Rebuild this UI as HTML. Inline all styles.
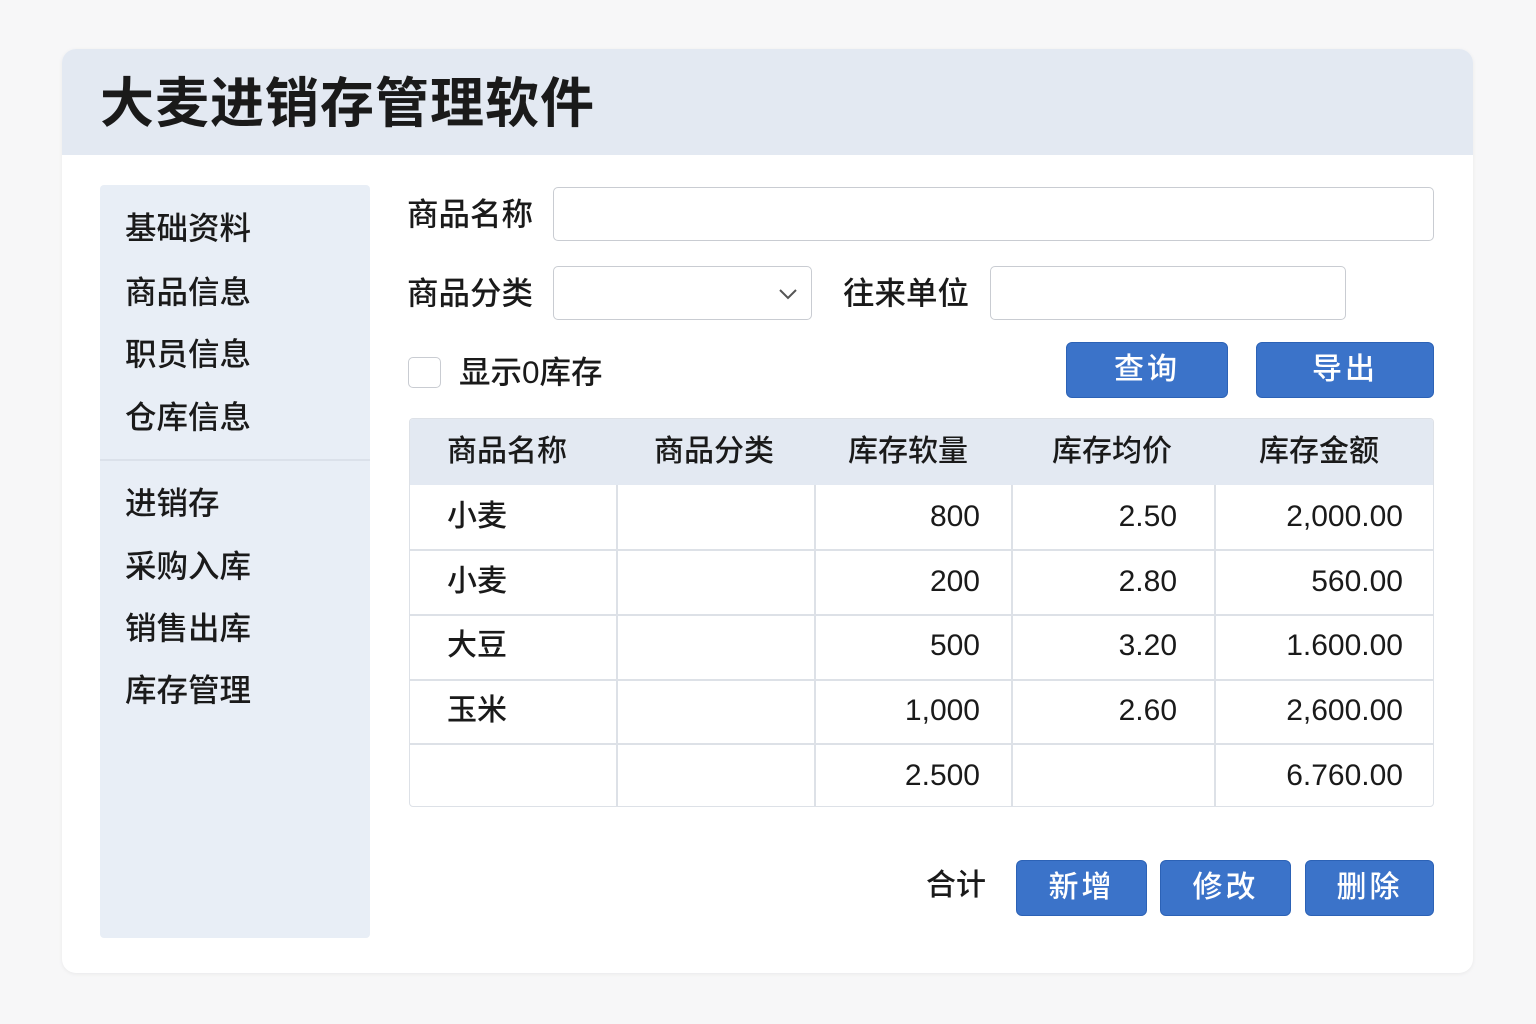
<!DOCTYPE html><html><head><meta charset="utf-8"><style>
*{margin:0;padding:0;box-sizing:border-box}
body{width:1536px;height:1024px;background:#f7f7f8;font-family:"Liberation Sans","Noto Sans CJK SC",sans-serif;color:#1a1a1a;position:relative;overflow:hidden}
.a{position:absolute}
.card{left:62px;top:49px;width:1411px;height:924px;background:#fff;border-radius:14px;box-shadow:0 1px 4px rgba(0,0,0,.06);overflow:hidden}
.hd{left:0;top:0;width:1411px;height:106px;background:#e3e9f2}
.t{font-size:30px;line-height:40px;white-space:nowrap;font-weight:500}
.s{font-size:31.5px}
.inp{border:1.5px solid #c9ccd2;border-radius:5px;background:#fff}
.btn{background:#3b73c9;border:1px solid #2c62b6;border-radius:6px;color:#fff;font-size:30px;text-align:center;letter-spacing:3px;font-weight:500}
.cell{position:absolute;font-size:30px;line-height:40px;font-weight:500;white-space:nowrap}
</style></head><body>
<div class="a card"><div class="a hd"></div>
<div class="a" style="left:38px;top:22px;font-size:54px;font-weight:bold;line-height:66px;letter-spacing:1px">大麦进销存管理软件</div></div>
<div class="a" style="left:100px;top:185px;width:270px;height:753px;background:#e8eef6;border-radius:4px"></div>
<div class="a" style="left:100px;top:459px;width:270px;height:2px;background:#dbe1ea"></div>
<div class="a t s" style="left:125px;top:208px">基础资料</div>
<div class="a t s" style="left:125px;top:272px">商品信息</div>
<div class="a t s" style="left:125px;top:334px">职员信息</div>
<div class="a t s" style="left:125px;top:397px">仓库信息</div>
<div class="a t s" style="left:125px;top:483px">进销存</div>
<div class="a t s" style="left:125px;top:546px">采购入库</div>
<div class="a t s" style="left:125px;top:608px">销售出库</div>
<div class="a t s" style="left:125px;top:670px">库存管理</div>

<div class="a t s" style="left:407px;top:194px">商品名称</div>
<div class="a inp" style="left:553px;top:187px;width:881px;height:54px"></div>
<div class="a t s" style="left:407px;top:273px">商品分类</div>
<div class="a inp" style="left:553px;top:266px;width:259px;height:54px"></div>
<svg class="a" style="left:778px;top:287px" width="20" height="14"><path d="M2 3l8 8 8-8" fill="none" stroke="#555" stroke-width="2"/></svg>
<div class="a t s" style="left:843px;top:273px">往来单位</div>
<div class="a inp" style="left:990px;top:266px;width:356px;height:54px"></div>
<div class="a inp" style="left:408px;top:357px;width:33px;height:31px;border-radius:5px"></div>
<div class="a t s" style="left:459px;top:352px">显示0库存</div>
<div class="a btn" style="left:1066px;top:342px;width:162px;height:56px;line-height:54px">查询</div>
<div class="a btn" style="left:1256px;top:342px;width:178px;height:56px;line-height:54px">导出</div>

<div class="a" style="left:409px;top:418px;width:1025px;height:389px;border:1.5px solid #dde1e7;border-radius:4px;overflow:hidden">
<div class="a" style="left:0;top:0;width:1025px;height:66px;background:#e3e9f2"></div>
<div class="a" style="left:0;top:130px;width:1025px;height:1.5px;background:#dde1e7"></div>
<div class="a" style="left:0;top:195px;width:1025px;height:1.5px;background:#dde1e7"></div>
<div class="a" style="left:0;top:260px;width:1025px;height:1.5px;background:#dde1e7"></div>
<div class="a" style="left:0;top:324px;width:1025px;height:1.5px;background:#dde1e7"></div>
<div class="a" style="left:206px;top:66px;width:1.5px;height:330px;background:#dde1e7"></div>
<div class="a" style="left:404px;top:66px;width:1.5px;height:330px;background:#dde1e7"></div>
<div class="a" style="left:601px;top:66px;width:1.5px;height:330px;background:#dde1e7"></div>
<div class="a" style="left:804px;top:66px;width:1.5px;height:330px;background:#dde1e7"></div>
</div>
<div class="cell" style="left:447px;top:432px">商品名称</div>
<div class="cell" style="left:654px;top:432px">商品分类</div>
<div class="cell" style="left:848px;top:432px">库存软量</div>
<div class="cell" style="left:1052px;top:432px">库存均价</div>
<div class="cell" style="left:1259px;top:432px">库存金额</div>

<div class="cell" style="left:447px;top:497px">小麦</div>
<div class="cell" style="right:556px;top:497px">800</div>
<div class="cell" style="right:359px;top:497px">2.50</div>
<div class="cell" style="right:133px;top:497px">2,000.00</div>
<div class="cell" style="left:447px;top:562px">小麦</div>
<div class="cell" style="right:556px;top:562px">200</div>
<div class="cell" style="right:359px;top:562px">2.80</div>
<div class="cell" style="right:133px;top:562px">560.00</div>
<div class="cell" style="left:447px;top:626px">大豆</div>
<div class="cell" style="right:556px;top:626px">500</div>
<div class="cell" style="right:359px;top:626px">3.20</div>
<div class="cell" style="right:133px;top:626px">1.600.00</div>
<div class="cell" style="left:447px;top:691px">玉米</div>
<div class="cell" style="right:556px;top:691px">1,000</div>
<div class="cell" style="right:359px;top:691px">2.60</div>
<div class="cell" style="right:133px;top:691px">2,600.00</div>
<div class="cell" style="right:556px;top:756px">2.500</div>
<div class="cell" style="right:133px;top:756px">6.760.00</div>

<div class="a t" style="left:926px;top:866px">合计</div>
<div class="a btn" style="left:1016px;top:860px;width:131px;height:56px;line-height:54px">新增</div>
<div class="a btn" style="left:1160px;top:860px;width:131px;height:56px;line-height:54px">修改</div>
<div class="a btn" style="left:1305px;top:860px;width:129px;height:56px;line-height:54px">删除</div>
</body></html>
